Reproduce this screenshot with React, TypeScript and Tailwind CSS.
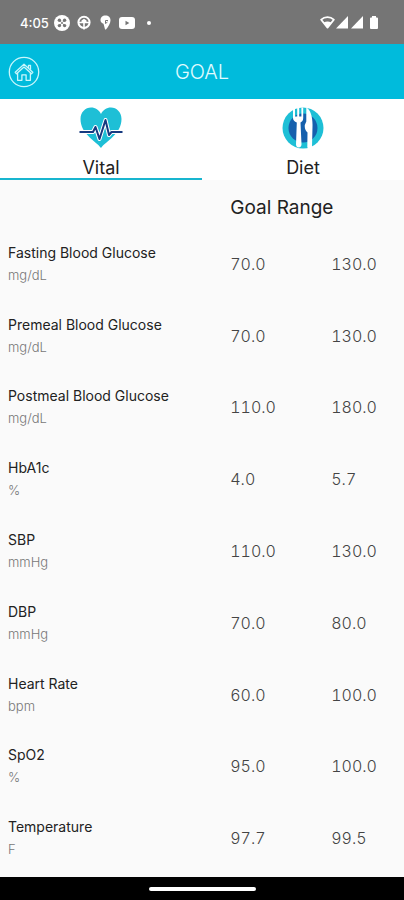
import { useState } from 'react';

const goals = [
  { name: 'Fasting Blood Glucose', unit: 'mg/dL', min: '70.0', max: '130.0' },
  { name: 'Premeal Blood Glucose', unit: 'mg/dL', min: '70.0', max: '130.0' },
  { name: 'Postmeal Blood Glucose', unit: 'mg/dL', min: '110.0', max: '180.0' },
  { name: 'HbA1c', unit: '%', min: '4.0', max: '5.7' },
  { name: 'SBP', unit: 'mmHg', min: '110.0', max: '130.0' },
  { name: 'DBP', unit: 'mmHg', min: '70.0', max: '80.0' },
  { name: 'Heart Rate', unit: 'bpm', min: '60.0', max: '100.0' },
  { name: 'SpO2', unit: '%', min: '95.0', max: '100.0' },
  { name: 'Temperature', unit: 'F', min: '97.7', max: '99.5' },
];

function StatusBar() {
  return (
    <div className="flex h-11 shrink-0 items-center justify-between bg-[#757575] pt-px pr-[26px] pl-5 text-white">
      <div className="flex items-center">
        <span className="w-[34px] text-[13px] leading-5 font-medium">4:05</span>
        <svg width="16" height="16" viewBox="0 0 16 16" aria-hidden="true">
          <circle cx="8" cy="8" r="8" fill="#fff" />
          <g fill="#757575">
            <circle cx="5.4" cy="5.2" r="1.7" />
            <circle cx="10.6" cy="5.2" r="1.7" />
            <circle cx="5.4" cy="10.6" r="1.7" />
            <circle cx="10.6" cy="10.6" r="1.7" />
          </g>
          <path d="M5.4 5.2 10.6 10.6M10.6 5.2 5.4 10.6" stroke="#757575" strokeWidth="0.8" />
        </svg>
        <svg className="ml-[7px]" width="14" height="15" viewBox="0 0 14 15" aria-hidden="true">
          <circle cx="7" cy="7.3" r="5.6" fill="none" stroke="#fff" strokeWidth="2" />
          <path d="M1.5 7.5h11M7 7.5v7" stroke="#fff" strokeWidth="1.6" />
          <path d="M4.5 7.5v-2L7 3.800l2.500 1.700v2z" fill="#fff" />
        </svg>
        <svg className="ml-[9px]" width="11" height="15" viewBox="0 0 11 15" aria-hidden="true">
          <path d="M5.5.5C2.4.5.5 2.6.5 5.2c0 2 1.500 3 3 3.600l1.600 5.700h.9c2.500-3.300 4.500-6.200 4.500-9.300C10.500 2.500 8.500.5 5.500.5z" fill="#fff" />
          <path d="M8 5.500H5.500v3l2-1.500" fill="none" stroke="#757575" strokeWidth="1" />
        </svg>
        <svg className="ml-2" width="16" height="12" viewBox="0 0 16 12" aria-hidden="true">
          <rect width="16" height="12" rx="3" fill="#fff" />
          <path d="M6.5 3.700v4.600L10.300 6z" fill="#757575" />
        </svg>
        <span className="ml-3 h-1 w-1 rounded-full bg-white" />
      </div>
      <div className="flex items-center">
        <svg width="15" height="13" viewBox="0 0 15 13" aria-hidden="true">
          <path d="M1.200 3.700C4.800.3 10.200.3 13.800 3.700L7.500 11.600z" fill="none" stroke="#fff" strokeWidth="1.8" strokeLinejoin="round" />
          <path d="M3.800 6.600c2.300-1.600 5.100-1.600 7.400 0L7.500 11.500z" fill="#fff" />
        </svg>
        <svg className="ml-px" width="12" height="13" viewBox="0 0 12 13" aria-hidden="true">
          <path d="M12 0v12.500H0z" fill="#fff" />
        </svg>
        <svg className="ml-[3px]" width="12" height="13" viewBox="0 0 12 13" aria-hidden="true">
          <path d="M12 0v12.500H0z" fill="#fff" />
        </svg>
        <svg className="ml-[7px]" width="8" height="13" viewBox="0 0 8 13" aria-hidden="true">
          <path d="M2 1.500V0h4v1.500h1a1 1 0 0 1 1 1V12a1 1 0 0 1-1 1H1a1 1 0 0 1-1-1V2.500a1 1 0 0 1 1-1z" fill="#fff" />
        </svg>
      </div>
    </div>
  );
}

function HomeIcon() {
  return (
    <svg width="32" height="32" viewBox="0 0 32 32" fill="none" stroke="#c9f6fb" strokeWidth="1.3" strokeLinejoin="round" aria-hidden="true">
      <circle cx="16" cy="16" r="14.7" />
      <path d="M7.200 16.200 16 8.300l8.800 7.900-1.300 1.500L16 11l-7.500 6.700z" />
      <path d="M9.600 17v7.300h4.300v-5.500h4.200v5.500h4.300V17" />
      <path d="M20.500 12V9.300h2v4.500" />
    </svg>
  );
}

function VitalIcon() {
  return (
    <svg width="44" height="42" viewBox="0 0 44 42" fill="none" aria-hidden="true">
      <path d="M22 41C17 34 1.500 27 1.500 12 1.500 5 6.500.5 12 .5c4.500 0 8 2.500 10 6.500 2-4 5.500-6.500 10-6.500 5.500 0 10.500 4.500 10.500 11.500C42.500 27 27 34 22 41z" fill="#1ebfd6" />
      <path d="M.5 25H14l2.500-5 4 12 6-19 3.500 15 2.500-3H43.500" stroke="#fff" strokeWidth="4" strokeLinejoin="round" />
      <path d="M.5 25H14l2.500-5 4 12 6-19 3.500 15 2.500-3H43.500" stroke="#173a80" strokeWidth="2" strokeLinejoin="round" />
    </svg>
  );
}

function DietIcon() {
  return (
    <svg width="42" height="42" viewBox="0 0 42 42" aria-hidden="true">
      <circle cx="21" cy="21" r="20.5" fill="#1ebfd6" />
      <circle cx="21" cy="21" r="14.5" fill="#1560ad" />
      <g fill="#fff">
        <path d="M11 1h2v8.500h2.200V.5h2v9h2.200V.5h1.800V11c0 2.500-1.200 3.800-2.700 4.500l1 22c0 4-5.500 4-5.500 0l.8-22C12.500 14.500 11 13.500 11 11z" />
        <path d="M24.300.5c4.500 2.500 6.500 10 6.200 19l-.5 20.500c-.5 2.500-4.300 2.500-4.700 0l.2-14.500c-2-2-3-4-2.700-7.500l1.500-3.500z" />
      </g>
    </svg>
  );
}

const tabs = [
  { id: 'vital', label: 'Vital', Icon: VitalIcon },
  { id: 'diet', label: 'Diet', Icon: DietIcon },
];

export default function App() {
  const [activeTab, setActiveTab] = useState('vital');

  return (
    <div className="flex min-h-screen flex-col bg-[#fafafa] font-['Inter','Open_Sans',sans-serif] text-[#222]">
      <StatusBar />

      <header className="grid h-[55px] shrink-0 grid-cols-[1fr_auto_1fr] items-center bg-[#00bbdc] px-2 pt-px">
        <button type="button" aria-label="Home" className="justify-self-start">
          <HomeIcon />
        </button>
        <h1 className="text-[20px] leading-6 font-light text-[#e2fbff]">GOAL</h1>
      </header>

      <div role="tablist" className="grid h-[81px] shrink-0 grid-cols-2 bg-white">
        {tabs.map(({ id, label, Icon }) => (
          <button
            key={id}
            type="button"
            role="tab"
            aria-selected={activeTab === id}
            onClick={() => setActiveTab(id)}
            className={`flex flex-col items-center border-b-2 pt-2 ${
              activeTab === id ? 'border-[#18b5cf]' : 'border-transparent'
            }`}
          >
            <span className="flex h-[42px] items-center">
              <Icon />
            </span>
            <span className="mt-[9px] text-[18px] leading-5">{label}</span>
          </button>
        ))}
      </div>

      <table className="flex flex-1 flex-col pb-[3px] text-left">
        <thead className="block">
          <tr className="flex h-12 pt-2">
            <td className="w-[57%]" />
            <th scope="col" colSpan={2} className="flex flex-1 items-center text-[19px] font-normal">
              Goal Range
            </th>
          </tr>
        </thead>
        <tbody className="flex flex-1 flex-col">
          {goals.map((goal) => (
            <tr key={goal.name} className="flex min-h-14 flex-1 items-center">
              <th scope="row" className="w-[57%] pl-2 font-normal">
                <div className="text-[14px] leading-[22px]">{goal.name}</div>
                <div className="text-[13px] leading-[22px] font-light text-[#777]">{goal.unit}</div>
              </th>
              <td className="w-1/4 text-[16px] leading-6 font-light text-[#444] tabular-nums">{goal.min}</td>
              <td className="flex-1 text-[16px] leading-6 font-light text-[#444] tabular-nums">{goal.max}</td>
            </tr>
          ))}
        </tbody>
      </table>

      <div className="flex h-[23px] shrink-0 items-center justify-center bg-black">
        <span className="h-1 w-[107px] rounded-full bg-white" />
      </div>
    </div>
  );
}
